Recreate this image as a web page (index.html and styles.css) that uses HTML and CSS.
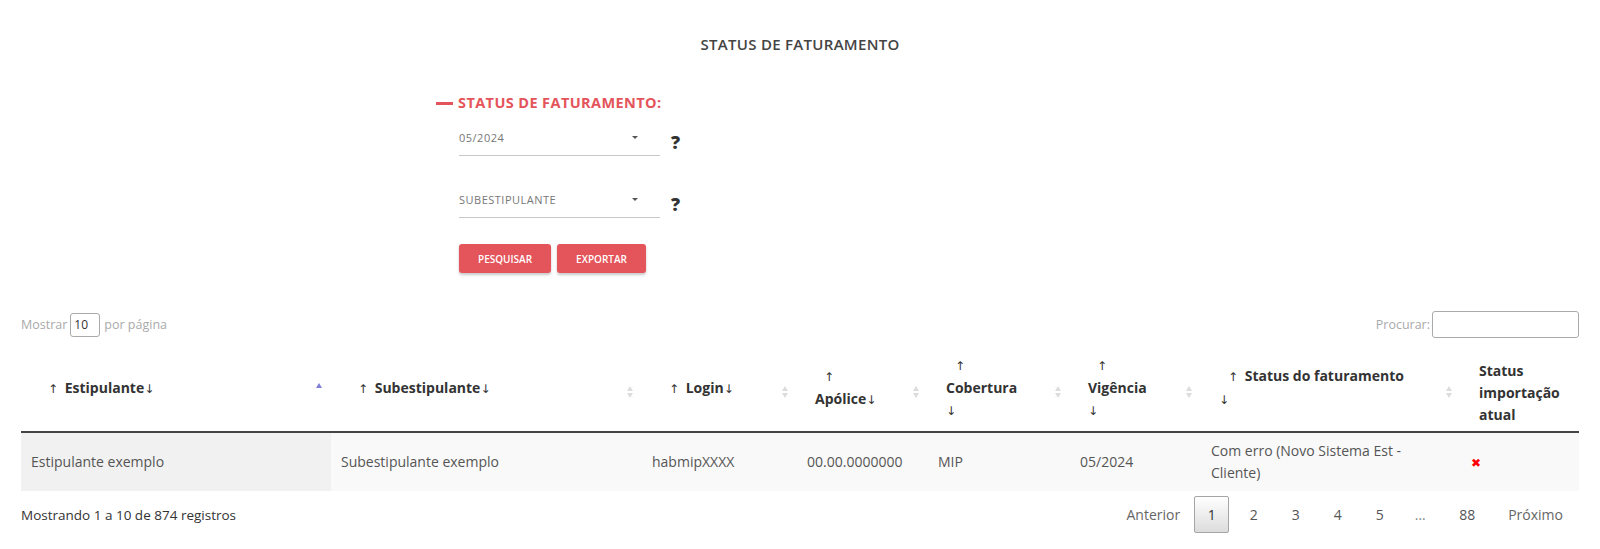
FILE: index.html
```html
<!DOCTYPE html>
<html lang="pt-BR">
<head>
<meta charset="utf-8">
<title>Status de Faturamento</title>
<link rel="stylesheet" href="styles.css">
</head>
<body>
<div class="page">
  <h1 class="page-title">STATUS DE FATURAMENTO</h1>

  <section class="filters">
    <h2 class="section-title"><span class="dash"></span>STATUS DE FATURAMENTO:</h2>
    <div class="field-row">
      <div class="select"><span class="select-value">05/2024</span><span class="caret"></span></div>
      <span class="help">?</span>
    </div>
    <div class="field-row">
      <div class="select"><span class="select-value">SUBESTIPULANTE</span><span class="caret"></span></div>
      <span class="help">?</span>
    </div>
    <div class="actions">
      <button class="btn" type="button">PESQUISAR</button>
      <button class="btn" type="button">EXPORTAR</button>
    </div>
  </section>

  <div class="table-tools">
    <label class="length">Mostrar<input class="length-input" type="text" value="10">por página</label>
    <label class="search">Procurar:<input class="search-input" type="text"></label>
  </div>

  <table class="grid">
    <colgroup>
      <col class="w-estip">
      <col class="w-subestip">
      <col class="w-login">
      <col class="w-apolice">
      <col class="w-cobertura">
      <col class="w-vigencia">
      <col class="w-status">
      <col class="w-import">
    </colgroup>
    <thead>
      <tr>
        <th><span class="up">↑</span> Estipulante<wbr><span class="dn">↓</span><span class="sort-icon asc"></span></th>
        <th><span class="up">↑</span> Subestipulante<wbr><span class="dn">↓</span><span class="sort-icon"></span></th>
        <th><span class="up">↑</span> Login<wbr><span class="dn">↓</span><span class="sort-icon"></span></th>
        <th><span class="up">↑</span> Apólice<wbr><span class="dn">↓</span><span class="sort-icon"></span></th>
        <th><span class="up">↑</span> Cobertura<wbr><span class="dn">↓</span><span class="sort-icon"></span></th>
        <th><span class="up">↑</span> Vigência<wbr><span class="dn">↓</span><span class="sort-icon"></span></th>
        <th><span class="up">↑</span> Status do faturamento<br><span class="dn">↓</span><span class="sort-icon"></span></th>
        <th class="no-sort">Status importação atual</th>
      </tr>
    </thead>
    <tbody>
      <tr>
        <td class="sorted">Estipulante exemplo</td>
        <td>Subestipulante exemplo</td>
        <td>habmipXXXX</td>
        <td>00.00.0000000</td>
        <td>MIP</td>
        <td>05/2024</td>
        <td>Com erro (Novo Sistema Est - Cliente)</td>
        <td><span class="fail">✖</span></td>
      </tr>
    </tbody>
  </table>

  <div class="table-footer">
    <div class="info">Mostrando 1 a 10 de 874 registros</div>
    <nav class="pager">
      <span class="pg edge">Anterior</span>
      <span class="pg current">1</span>
      <span class="pg">2</span>
      <span class="pg">3</span>
      <span class="pg">4</span>
      <span class="pg">5</span>
      <span class="pg ellipsis">…</span>
      <span class="pg">88</span>
      <span class="pg edge">Próximo</span>
    </nav>
  </div>
</div>
</body>
</html>
```

FILE: styles.css
```css
* { box-sizing: border-box; }

html, body {
  margin: 0;
  background: #fff;
}

body {
  font-family: "Open Sans", "Liberation Sans", sans-serif;
  color: #333;
}

.page {
  padding: 0 21px;
}

.page-title {
  margin: 34px 0 0;
  font-size: 15px;
  line-height: 20px;
  font-weight: 600;
  letter-spacing: 0.3px;
  color: #444;
  text-align: center;
}

/* ---------- filters ---------- */
.filters {
  margin: 39px 0 0 415px;
}

.section-title {
  display: flex;
  align-items: center;
  margin: 0;
  font-size: 14.5px;
  line-height: 20px;
  font-weight: 700;
  letter-spacing: 0.4px;
  color: #e4545b;
}

.dash {
  width: 17px;
  height: 3px;
  margin-right: 5px;
  background: #e4545b;
}

.field-row {
  display: flex;
  align-items: center;
  margin: 15px 0 0 23px;
}

.field-row + .field-row {
  margin-top: 34px;
}

.select {
  display: flex;
  justify-content: space-between;
  align-items: flex-start;
  width: 201px;
  height: 28px;
  padding-right: 22px;
  border-bottom: 1px solid #c8c8c8;
  font-size: 11px;
  line-height: 20px;
  letter-spacing: 0.5px;
  color: #777;
}

.caret {
  margin-top: 8px;
  width: 0;
  height: 0;
  border-left: 3px solid transparent;
  border-right: 3px solid transparent;
  border-top: 3px solid #555;
}

.help {
  margin-left: 11px;
  font-size: 18px;
  font-weight: 800;
  color: #333;
  line-height: 20px;
}

.actions {
  display: flex;
  gap: 6px;
  margin: 26px 0 0 23px;
}

.btn {
  height: 29px;
  padding: 0 19px;
  border: none;
  border-radius: 3px;
  background: #e4545b;
  color: #fff;
  font-family: "Open Sans", "Liberation Sans", sans-serif;
  font-size: 10px;
  font-weight: 600;
  box-shadow: 0 2px 3px rgba(0, 0, 0, 0.22);
}

/* ---------- table tools ---------- */
.table-tools {
  display: flex;
  justify-content: space-between;
  align-items: center;
  margin-top: 38px;
  height: 27px;
}

.length,
.search {
  display: flex;
  align-items: center;
  font-size: 12.5px;
  color: #aaa;
}

.length-input {
  width: 30px;
  height: 24px;
  margin: 0 4px 0 3px;
  padding: 0 3px;
  border: 1px solid #aaa;
  border-radius: 3px;
  font-family: "Open Sans", "Liberation Sans", sans-serif;
  font-size: 12px;
  color: #333;
}

.search-input {
  width: 147px;
  height: 27px;
  margin-left: 2px;
  border: 1px solid #aaa;
  border-radius: 3px;
}

/* ---------- table ---------- */
.grid {
  width: 100%;
  margin-top: 12px;
  border-collapse: collapse;
  table-layout: fixed;
}

.w-estip { width: 310px; }
.w-subestip { width: 311px; }
.w-login { width: 155px; }
.w-apolice { width: 131px; }
.w-cobertura { width: 142px; }
.w-vigencia { width: 131px; }
.w-status { width: 260px; }
.w-import { width: 118px; }

.grid th {
  position: relative;
  padding: 4px 46px 9px 18px;
  border-bottom: 2px solid #444;
  text-align: left;
  vertical-align: middle;
  font-size: 14px;
  line-height: 22px;
  font-weight: 700;
  color: #333;
}

.grid th.no-sort {
  padding: 9px 18px 4px 18px;
}

.up,
.dn {
  font-family: "DejaVu Sans", sans-serif;
  font-size: 12px;
  font-weight: 400;
  color: #333;
}

.up {
  margin: 0 3px 0 9px;
}

.sort-icon {
  position: absolute;
  right: 8px;
  top: 50%;
  width: 7px;
  height: 14px;
  margin-top: -6px;
}

.sort-icon::before,
.sort-icon::after {
  content: "";
  position: absolute;
  left: 0;
  width: 0;
  height: 0;
  border-left: 3.5px solid transparent;
  border-right: 3.5px solid transparent;
}

.sort-icon::before {
  top: 1px;
  border-bottom: 5px solid #dcdcdc;
}

.sort-icon::after {
  bottom: 1px;
  border-top: 5px solid #dcdcdc;
}

.sort-icon.asc {
  margin-top: -9px;
}

.sort-icon.asc::before {
  border-bottom-color: #7f7fd9;
}

.sort-icon.asc::after {
  display: none;
}

.grid td {
  padding: 7px 10px;
  background: #f9f9f9;
  vertical-align: middle;
  font-size: 14px;
  line-height: 22px;
  color: #555;
}

.grid td.sorted {
  background: #f1f1f1;
}

.fail {
  font-family: "DejaVu Sans", sans-serif;
  font-size: 12px;
  color: #f00;
}

/* ---------- footer ---------- */
.table-footer {
  display: flex;
  justify-content: space-between;
  align-items: center;
  margin-top: 5px;
}

.info {
  font-size: 13.5px;
  color: #333;
}

.pager {
  display: flex;
  align-items: center;
}

.pg {
  min-width: 35px;
  margin-left: 7px;
  padding: 7px 12px;
  border: 1px solid transparent;
  border-radius: 2px;
  font-size: 14px;
  line-height: 21px;
  color: #555;
  text-align: center;
}

.pg.edge {
  color: #666;
}

.pg.edge:first-child {
  padding-right: 6px;
}

.pg.edge:last-child {
  padding-right: 15px;
}

.pg.ellipsis {
  padding: 7px 10px 7px 7px;
  color: #888;
}

.pg.current {
  border-color: #a5a5a5;
  background: linear-gradient(to bottom, #fff 0%, #dcdcdc 100%);
  color: #333;
}
```
